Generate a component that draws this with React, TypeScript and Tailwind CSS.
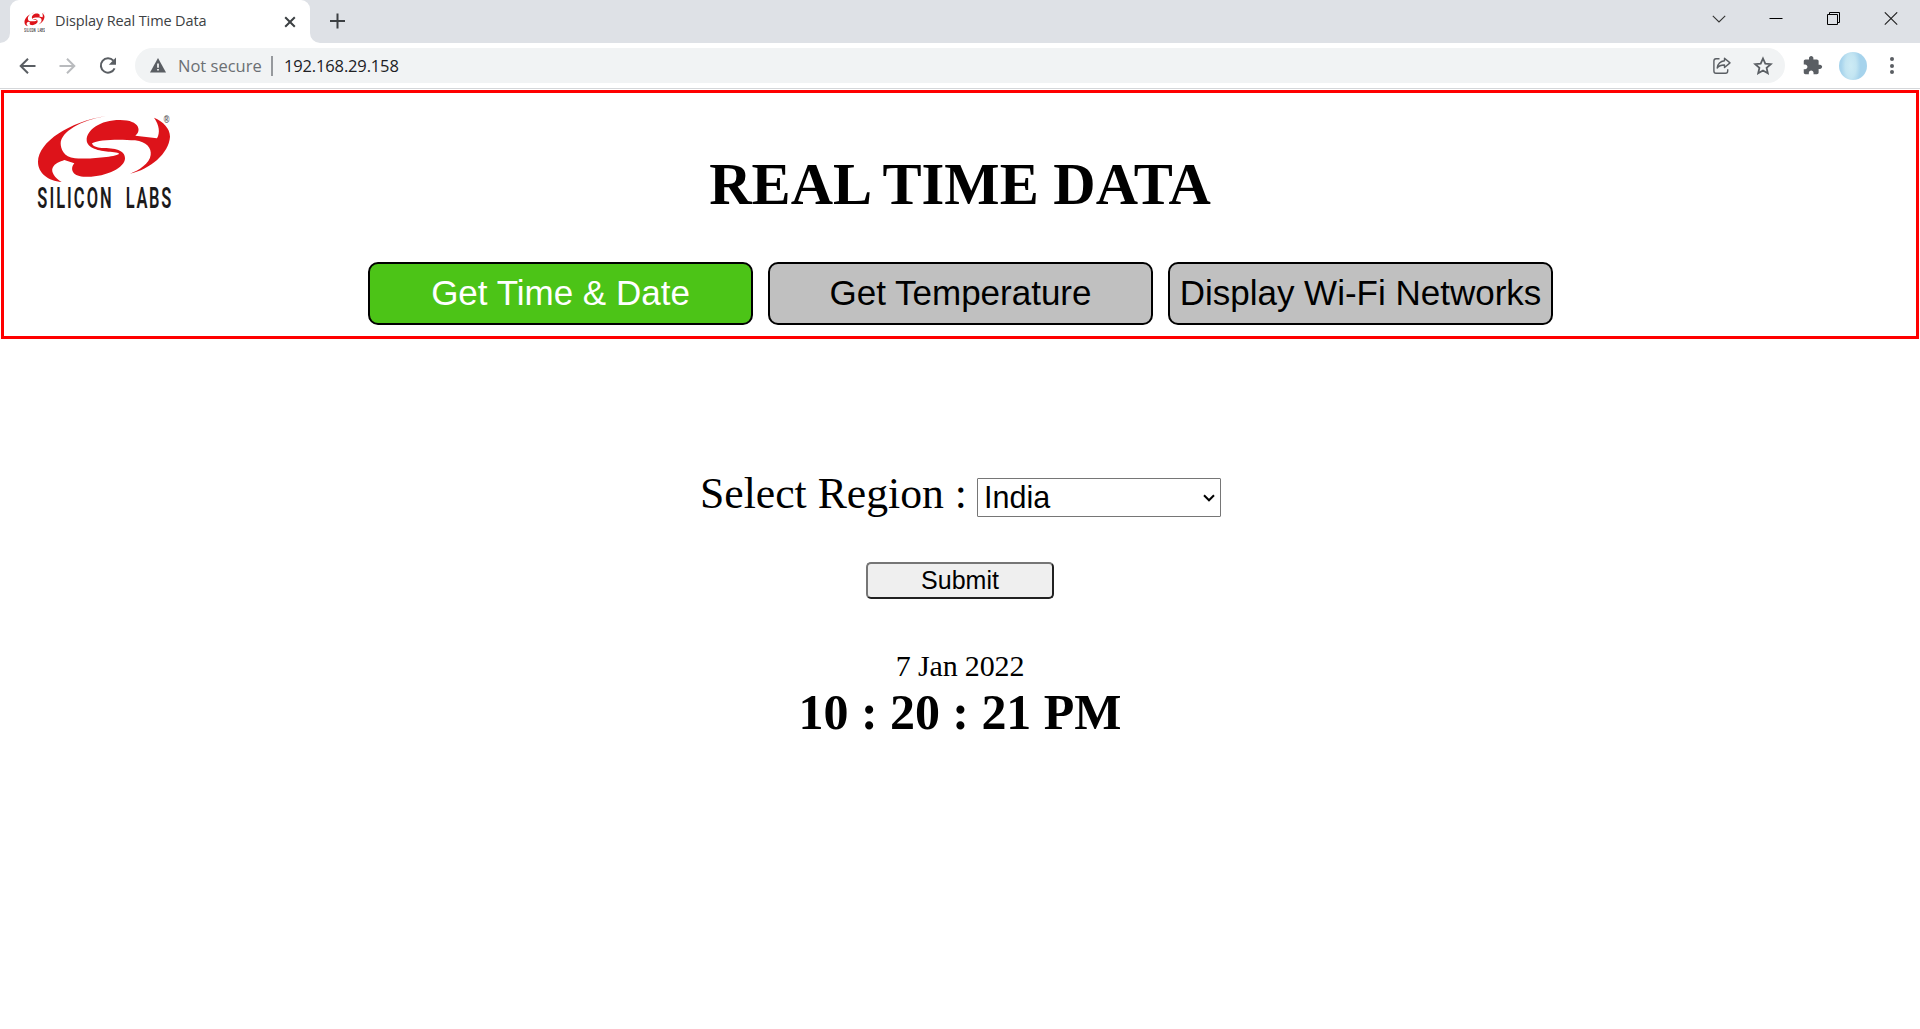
import React from "react";

const swoosh =
  "M258 48 C150 65 55 125 54 185 C54 220 85 242 125 246 C105 235 92 215 98 203 C104 190 120 185 133 180 L163 190 C150 205 155 228 190 230 C250 235 315 205 315 175 C315 150 285 144 245 144 C230 143 218 139 216 130 C235 118 300 117 345 121 C380 125 395 145 392 165 C390 190 355 212 330 221 C390 208 447 160 450 110 C450 85 430 65 402 53 C418 75 421 98 411 115 L346 107 C364 95 362 60 300 60 C240 60 200 90 200 120 C200 145 240 153 265 155 C280 155 300 158 297 162 C280 172 200 178 165 175 C130 172 122 145 122 130 C124 95 180 62 258 48 Z";

function Logo({ className, view }: { className: string; view: string }) {
  return (
    <svg className={className} viewBox={view} preserveAspectRatio="none">
      <path d={swoosh} fill="#dd131a" />
      <g fontFamily="Roboto, sans-serif" fontWeight="600" fontSize="88" fill="#1c1a1b">
        <text transform="translate(52 324) scale(0.56 1)" textLength="398" lengthAdjust="spacing">
          SILICON
        </text>
        <text transform="translate(317 324) scale(0.56 1)" textLength="244" lengthAdjust="spacing">
          LABS
        </text>
      </g>
      <text
        transform="translate(431 70) scale(0.7 1)"
        fontFamily="Liberation Sans, sans-serif"
        fontWeight="700"
        fontSize="33"
        fill="#555"
      >
        ®
      </text>
    </svg>
  );
}

function TabStrip() {
  return (
    <div className="flex h-[43px] bg-[#dee1e6]">
      <div className="relative ml-[10px] flex h-[43px] w-[300px] items-center rounded-t-[9px] bg-white">
        <svg className="absolute -left-[10px] bottom-0 h-[10px] w-[10px]" viewBox="0 0 10 10">
          <path d="M10 0A10 10 0 0 1 0 10H10Z" fill="#fff" />
        </svg>
        <svg className="absolute -right-[10px] bottom-0 h-[10px] w-[10px]" viewBox="0 0 10 10">
          <path d="M0 0A10 10 0 0 0 10 10H0Z" fill="#fff" />
        </svg>
        <Logo className="ml-[14px] h-[20px] w-[21px]" view="45 40 415 290" />
        <span className="ml-[10px] w-[220px] whitespace-nowrap pb-[2px] font-['Open_Sans',sans-serif] text-[14.5px] tracking-[-0.12px] text-[#3c4043]">
          Display Real Time Data
        </span>
        <svg className="ml-[8px] h-[14px] w-[14px]" viewBox="0 0 14 14" stroke="#3c4043" strokeWidth="2">
          <path d="M2.2 2.2L11.8 11.8M11.8 2.2L2.2 11.8" />
        </svg>
      </div>
      <svg className="ml-[19px] mt-[13px] h-[16px] w-[16px]" viewBox="0 0 16 16" stroke="#3c4043" strokeWidth="2">
        <path d="M8.500 .5V15.500M1 8H16" />
      </svg>
      <div className="ml-auto mr-[22px] mt-[12px] flex h-[14px] items-center">
        <svg className="h-[14px] w-[14px]" viewBox="0 0 14 14" fill="none" stroke="#333" strokeWidth="1.1">
          <path d="M.8 3.800L7 10L13.200 3.800" />
        </svg>
        <svg className="ml-[43px] h-[14px] w-[14px]" viewBox="0 0 14 14">
          <path d="M.5 6H13.500V7H.5Z" fill="#000" />
        </svg>
        <svg className="ml-[44px] h-[14px] w-[14px]" viewBox="0 0 14 14" fill="none" stroke="#000">
          <path d="M.5 2.500H10.500V12.500H.5ZM2.500 2.500V.5H12.500V10.500H10.500" />
        </svg>
        <svg className="ml-[43px] h-[14px] w-[14px]" viewBox="0 0 14 14" stroke="#222" strokeWidth="1.1">
          <path d="M.8 .3L13.200 12.700M13.200 .3L.8 12.700" />
        </svg>
      </div>
    </div>
  );
}

function Toolbar() {
  return (
    <div className="flex h-[46px] items-center border-b border-[#d5d7da] bg-white">
      <svg className="ml-[19px] h-[18px] w-[18px]" viewBox="0 0 18 18" fill="none" stroke="#5a5e63" strokeWidth="2">
        <path d="M16.500 9H2M9 1.700L1.700 9L9 16.300" />
      </svg>
      <svg className="ml-[22px] h-[18px] w-[18px]" viewBox="0 0 18 18" fill="none" stroke="#b9bbbe" strokeWidth="2">
        <path d="M.5 9H15M8 1.700L15.300 9L8 16.300" />
      </svg>
      <svg className="ml-[22px] h-[18px] w-[18px]" viewBox="0 0 18 18" fill="none" stroke="#5a5e63" strokeWidth="2">
        <path d="M14.400 3.600A7.200 7.200 0 1 0 15.600 11.400" />
        <path d="M17 .5V7.800H9.800Z" fill="#5a5e63" stroke="none" />
      </svg>
      <div className="ml-[18px] flex h-[35px] w-[1650px] items-center rounded-full bg-[#f1f3f4] font-['Open_Sans',sans-serif] text-[16.5px]">
        <svg className="ml-[15px] h-[15px] w-[16px]" viewBox="0 0 16 15">
          <path d="M8 0L16 14.500H0Z" fill="#5a5e63" />
          <path d="M7.200 5.500H8.800V9.800H7.200ZM7.200 11H8.800V12.600H7.200Z" fill="#fff" />
        </svg>
        <span className="ml-[12px] w-[93px] whitespace-nowrap pt-px text-[#6b6f73]">Not secure</span>
        <span className="h-[20px] w-[2px] bg-[#96999d]" />
        <span className="ml-[11px] whitespace-nowrap pt-px tracking-[-0.15px] text-[#202124]">192.168.29.158</span>
        <svg className="ml-auto h-[18px] w-[18px]" viewBox="0 0 18 18" fill="none" stroke="#5a5e63" strokeWidth="1.4">
          <path d="M6.500 1.700H3Q.9 1.700 .9 4V14Q.9 16.300 3 16.300H12.500Q14.700 16.300 14.700 14V12.300" />
          <path d="M11.500 1.300L17 5.900L11.500 10.500V8C8.500 7.900 6 8.700 4.200 11C4.800 7 7.500 4.300 11.500 3.800Z" strokeLinejoin="round" />
        </svg>
        <svg className="ml-[22px] mr-[12px] h-[20px] w-[20px]" viewBox="0 0 20 20" fill="none" stroke="#5a5e63" strokeWidth="1.8">
          <path d="M10 2.500L12.300 7.700L17.800 8.200L13.600 11.900L14.800 17.300L10 14.500L5.200 17.300L6.400 11.900L2.200 8.200L7.700 7.700Z" />
        </svg>
      </div>
      <svg className="ml-[17px] h-[21px] w-[21px]" viewBox="0 0 24 24" fill="#5a5e63">
        <path d="M20.500 11H19V7c0-1.100-.9-2-2-2h-4V3.500C13 2.120 11.880 1 10.500 1S8 2.120 8 3.500V5H4c-1.100 0-1.990.9-1.990 2v3.800H3.500c1.490 0 2.700 1.210 2.700 2.700s-1.210 2.700-2.700 2.700H2V20c0 1.100.9 2 2 2h3.800v-1.500c0-1.490 1.210-2.700 2.700-2.700 1.490 0 2.700 1.210 2.700 2.700V22H17c1.100 0 2-.9 2-2v-4h1.500c1.380 0 2.500-1.120 2.500-2.500S21.880 11 20.500 11z" />
      </svg>
      <div className="ml-[16px] h-[28px] w-[28px] rounded-full bg-[radial-gradient(ellipse_35%_75%_at_42%_50%,#cdebf5_0%,#c3e5f2_55%,#a6d3ec_100%)]" />
      <div className="ml-[23px] flex flex-col gap-[2.500px]">
        <i className="h-[4px] w-[4px] rounded-full bg-[#5a5e63]" />
        <i className="h-[4px] w-[4px] rounded-full bg-[#5a5e63]" />
        <i className="h-[4px] w-[4px] rounded-full bg-[#5a5e63]" />
      </div>
    </div>
  );
}

const navClass =
  "h-[63px] w-[385px] whitespace-nowrap rounded-[10px] border-2 border-black pb-[2px] font-['Liberation_Sans',Arial,sans-serif] text-[35px] leading-none";

export default function App() {
  return (
    <div className="h-[1029px] w-[1920px] overflow-hidden bg-white font-['Liberation_Serif',serif] text-black">
      <TabStrip />
      <Toolbar />
      <header className="mx-px mt-px h-[249px] border-[3px] border-[#ff0000]">
        <div className="flex h-[169px]">
          <Logo className="ml-[16px] mt-[7px] h-[120px] w-[170px] shrink-0" view="0 0 510 360" />
          <h1 className="mt-[56px] w-[1540px] whitespace-nowrap text-center text-[58.6px] font-bold leading-[71px]">
            REAL TIME DATA
          </h1>
        </div>
        <nav className="ml-[364px] flex gap-[15px]">
          <button className={navClass + " bg-[#4cc417] text-white"}>Get Time &amp; Date</button>
          <button className={navClass + " bg-[#c0c0c0]"}>Get Temperature</button>
          <button className={navClass + " bg-[#c0c0c0]"}>Display Wi-Fi Networks</button>
        </nav>
      </header>
      <main className="flex flex-col items-center">
        <div className="mt-[132px] flex h-[46px] w-[522px] items-start justify-between">
          <label className="ml-px whitespace-nowrap text-[43.7px] leading-[44px]">Select Region :</label>
          <div className="mt-[7px] flex h-[39px] w-[244px] items-center justify-between rounded-[1px] border border-[#767676] pl-[6px] pr-[5px] font-['Liberation_Sans',Arial,sans-serif] text-[30.5px] leading-none">
            <span className="pb-px">India</span>
            <svg className="h-[8px] w-[12px]" viewBox="0 0 12 8" fill="none" stroke="#000" strokeWidth="2">
              <path d="M1 1.300L6 6.300L11 1.300" />
            </svg>
          </div>
        </div>
        <button className="mt-[45px] h-[37px] w-[188px] rounded-[5px] border-2 border-t-[#767676] border-l-[#767676] border-b-[#212121] border-r-[#212121] bg-[#efefef] pb-px font-['Liberation_Sans',Arial,sans-serif] text-[25px] leading-none">
          Submit
        </button>
        <p className="mt-[50px] text-[30px] leading-[33px] tracking-[-0.15px]">7 Jan 2022</p>
        <p className="mt-px text-[50px] font-bold leading-[58px] tracking-[-0.05px]">10 : 20 : 21 PM</p>
      </main>
    </div>
  );
}
